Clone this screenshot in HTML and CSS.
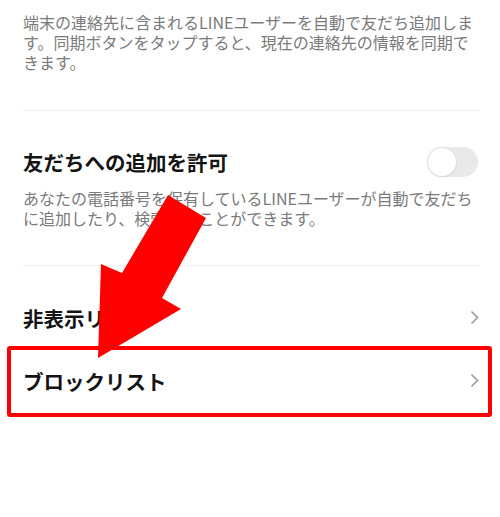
FILE: index.html
```html
<!DOCTYPE html>
<html lang="ja">
<head>
<meta charset="utf-8">
<link rel="stylesheet" href="styles.css">
</head>
<body>
<div class="page">
  <section class="block">
    <p class="desc">端末の連絡先に含まれるLINEユーザーを自動で友だち追加します。同期ボタンをタップすると、現在の連絡先の情報を同期できます。</p>
  </section>
  <div class="divider"></div>
  <section class="block block-toggle">
    <div class="title-row">
      <span class="title">友だちへの追加を許可</span>
      <span class="toggle"><span class="knob"></span></span>
    </div>
    <p class="desc desc-2">あなたの電話番号を保有しているLINEユーザーが自動で友だちに追加したり、検索することができます。</p>
  </section>
  <div class="divider"></div>
  <ul class="list">
    <li class="row"><span class="title">非表示リスト</span><svg class="chev" width="9" height="15" viewBox="0 0 9 15"><path d="M1.5 1.5 L7.5 7.5 L1.5 13.5" fill="none" stroke="#9a9a9a" stroke-width="1.6"/></svg></li>
    <li class="row"><span class="title">ブロックリスト</span><svg class="chev" width="9" height="15" viewBox="0 0 9 15"><path d="M1.5 1.5 L7.5 7.5 L1.5 13.5" fill="none" stroke="#9a9a9a" stroke-width="1.6"/></svg></li>
  </ul>
  <div class="highlight"></div>
  <svg class="arrow" width="500" height="517" viewBox="0 0 500 517"><polygon points="168,195 206,218 162,298 181,309 98,358 101,264 122,273" fill="#ff0000"/></svg>
</div>
</body>
</html>
```
FILE: styles.css
```css
html, body {
  margin: 0;
  padding: 0;
  background: #ffffff;
}
body {
  font-family: "Noto Sans CJK JP", "Noto Sans", sans-serif;
  width: 500px;
  height: 517px;
  overflow: hidden;
}
.page {
  position: relative;
  width: 500px;
  height: 517px;
  padding: 0 20px 0 23px;
  box-sizing: border-box;
}
.block {
  margin: 0;
}
.desc {
  margin: 0;
  padding-top: 12px;
  font-size: 16px;
  line-height: 20px;
  color: #7a7a7a;
  padding-bottom: 38px;
}
.divider {
  height: 1px;
  background: #efefef;
}
.block-toggle {
  padding-top: 36px;
}
.title-row {
  display: flex;
  align-items: center;
  justify-content: space-between;
  height: 30px;
}
.title {
  font-size: 20.5px;
  font-weight: 700;
  color: #141414;
  line-height: 30px;
}
.toggle {
  display: block;
  width: 51px;
  height: 30px;
  border-radius: 15px;
  background: #e9e9ea;
  position: relative;
  margin-right: 2px;
}
.knob {
  position: absolute;
  left: 1px;
  top: 1px;
  width: 28px;
  height: 28px;
  border-radius: 50%;
  background: #ffffff;
  box-shadow: 0 0 0 1px #dedede, 0 1px 2px rgba(0,0,0,0.12);
}
.desc-2 {
  padding-top: 11px;
  padding-bottom: 37px;
}
.list {
  list-style: none;
  margin: 0;
  padding: 20px 0 0;
}
.row {
  display: flex;
  align-items: center;
  justify-content: space-between;
  height: 63px;
}
.chev {
  display: block;
  margin-right: 1px;
}
.highlight {
  position: absolute;
  left: 7px;
  top: 346px;
  width: 485px;
  height: 71px;
  box-sizing: border-box;
  border: 4px solid #ff0000;
  border-radius: 3px;
}
.arrow {
  position: absolute;
  left: 0;
  top: 0;
}
```
